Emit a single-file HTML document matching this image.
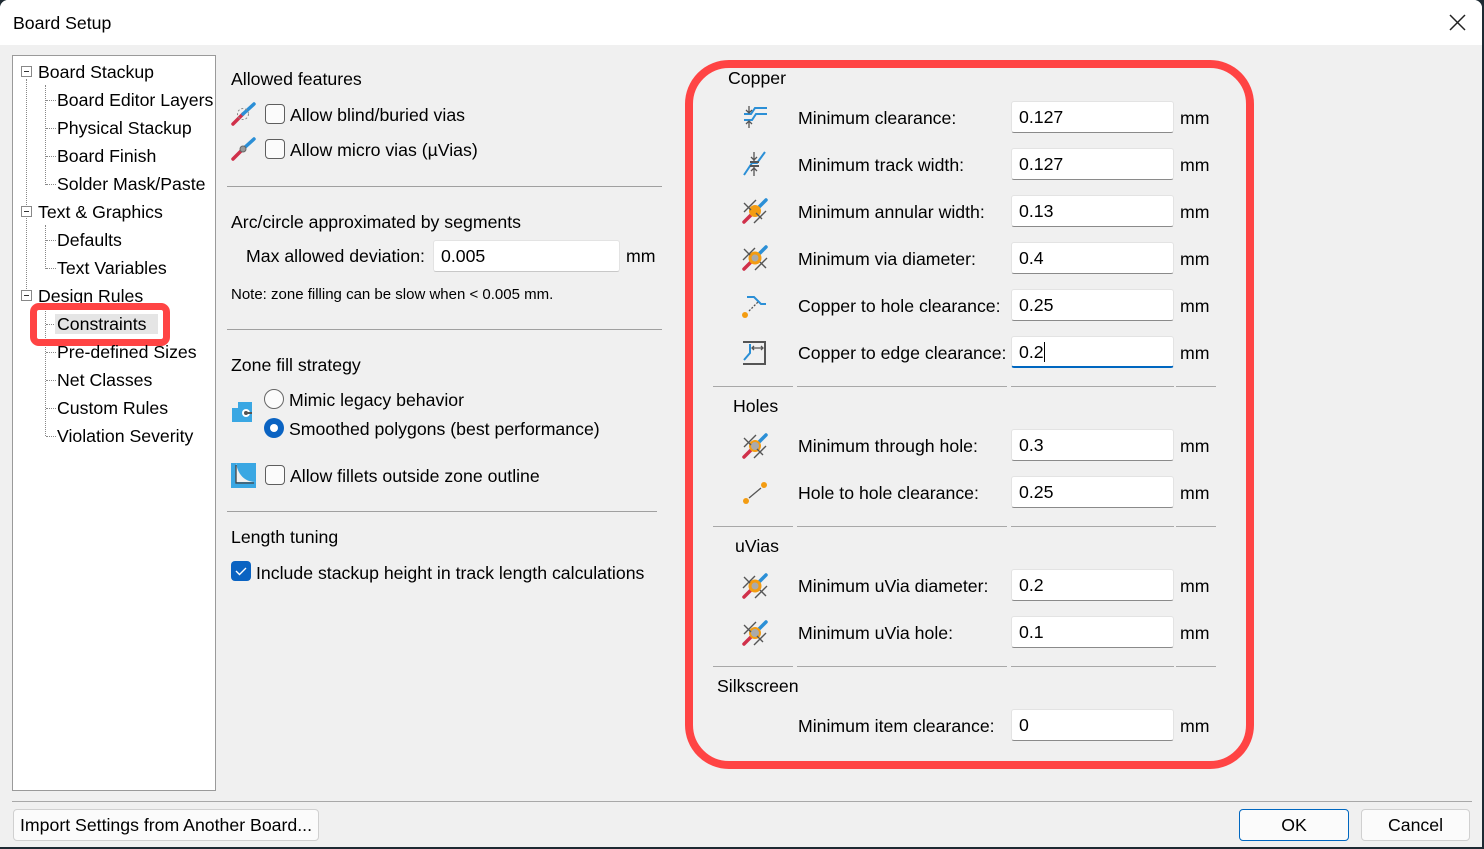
<!DOCTYPE html>
<html><head><meta charset="utf-8"><style>
*{box-sizing:border-box;margin:0;padding:0}
body{width:1484px;height:849px;overflow:hidden;background:#1e2a33;font-family:"Liberation Sans",sans-serif;font-size:17.7px;color:#000;position:relative}
#win{position:absolute;left:0;top:0;width:1482px;height:847px;background:#f0f0f0;border-radius:8px 8px 0 0;overflow:hidden}
.t{position:absolute;white-space:nowrap;line-height:22px}
.title{position:absolute;left:0;top:0;width:1482px;height:45px;background:#fff}
.tree{position:absolute;left:12px;top:55px;width:204px;height:736px;background:#fff;border:1px solid #9a9a9a}
.hl{position:absolute;left:227px;height:1px;background:#a0a0a0}
.sep{position:absolute;height:1px;background:#a8a8a8}
.inp{position:absolute;left:1011px;width:163px;height:32px;background:#fff;border:1px solid #e3e3e3;border-bottom:1px solid #8a8a8a;border-radius:3px;padding-left:7px;line-height:30px}
.cb{position:absolute;width:20px;height:20px;border:1px solid #5e5e5e;border-radius:4px;background:#fbfbfb}
.mm{position:absolute;left:1180px}
.ic{position:absolute}
.dot{position:absolute;border-left:1px dotted #888}
.doth{position:absolute;border-top:1px dotted #888;width:10px}
.pm{position:absolute;width:11px;height:11px;border:1px solid #888;background:#fff}
.pm:after{content:"";position:absolute;left:2px;top:4px;width:5px;height:1px;background:#333}
.btn{position:absolute;height:32px;border:1px solid #d0d0d0;border-radius:4px;background:#fbfbfb;text-align:center;line-height:30px}
</style></head><body><div id="win">
<div class="title"></div>
<div class="t" style="left:13px;top:12px">Board Setup</div>
<svg class="ic" style="left:1449px;top:14px" width="17" height="17"><path d="M1 1L16 16M16 1L1 16" stroke="#222" stroke-width="1.5"/></svg>

<div class="tree"></div>
<div class="dot" style="left:26px;top:79px;height:216px"></div>
<div class="dot" style="left:45px;top:85px;height:100px"></div>
<div class="dot" style="left:45px;top:225px;height:44px"></div>
<div class="dot" style="left:45px;top:308px;height:128px"></div>
<div class="pm" style="left:21px;top:66px"></div>
<div class="pm" style="left:21px;top:206px"></div>
<div class="pm" style="left:21px;top:290px"></div>
<div class="doth" style="left:46px;top:100px"></div><div class="doth" style="left:46px;top:128px"></div><div class="doth" style="left:46px;top:156px"></div><div class="doth" style="left:46px;top:184px"></div>
<div class="doth" style="left:46px;top:240px"></div><div class="doth" style="left:46px;top:268px"></div>
<div class="doth" style="left:46px;top:324px"></div><div class="doth" style="left:46px;top:352px"></div><div class="doth" style="left:46px;top:380px"></div><div class="doth" style="left:46px;top:408px"></div><div class="doth" style="left:46px;top:436px"></div>
<div class="t" style="left:38px;top:61px">Board Stackup</div>
<div class="t" style="left:57px;top:89px">Board Editor Layers</div>
<div class="t" style="left:57px;top:117px">Physical Stackup</div>
<div class="t" style="left:57px;top:145px">Board Finish</div>
<div class="t" style="left:57px;top:173px">Solder Mask/Paste</div>
<div class="t" style="left:38px;top:201px">Text &amp; Graphics</div>
<div class="t" style="left:57px;top:229px">Defaults</div>
<div class="t" style="left:57px;top:257px">Text Variables</div>
<div class="t" style="left:38px;top:285px">Design Rules</div>
<div style="position:absolute;left:55px;top:314px;width:103px;height:20px;background:#e5e5e5"></div>
<div class="t" style="left:57px;top:313px">Constraints</div>
<div style="position:absolute;left:30px;top:303px;width:140px;height:43px;border:7px solid #ff4444;border-radius:9px"></div>
<div class="t" style="left:57px;top:341px">Pre-defined Sizes</div>
<div class="t" style="left:57px;top:369px">Net Classes</div>
<div class="t" style="left:57px;top:397px">Custom Rules</div>
<div class="t" style="left:57px;top:425px">Violation Severity</div>

<div class="t" style="left:231px;top:68px">Allowed features</div>
<svg class="ic" style="left:230px;top:102px" width="26" height="24"><path d="M3 22L13 12" stroke="#d0304a" stroke-width="3.5" stroke-linecap="round"/><path d="M13 12L24 2" stroke="#2b8fd6" stroke-width="3.5" stroke-linecap="round"/><circle cx="13" cy="12" r="5.5" fill="none" stroke="#888" stroke-dasharray="2 2"/></svg>
<div class="cb" style="left:265px;top:104px"></div>
<div class="t" style="left:290px;top:104px">Allow blind/buried vias</div>
<svg class="ic" style="left:230px;top:137px" width="26" height="24"><path d="M3 22L13 12" stroke="#d0304a" stroke-width="3.5" stroke-linecap="round"/><path d="M13 12L24 2" stroke="#2b8fd6" stroke-width="3.5" stroke-linecap="round"/><circle cx="13" cy="12" r="3" fill="#999" stroke="#666"/></svg>
<div class="cb" style="left:265px;top:139px"></div>
<div class="t" style="left:290px;top:139px">Allow micro vias (µVias)</div>
<div class="hl" style="top:186px;width:435px"></div>
<div class="t" style="left:231px;top:211px">Arc/circle approximated by segments</div>
<div class="t" style="left:246px;top:245px">Max allowed deviation:</div>
<div class="inp" style="left:433px;top:240px;width:187px;border-bottom-color:#c8c8c8">0.005</div>
<div class="t" style="left:626px;top:245px">mm</div>
<div class="t" style="left:231px;top:284px;font-size:15px">Note: zone filling can be slow when &lt; 0.005 mm.</div>
<div class="hl" style="top:329px;width:435px"></div>
<div class="t" style="left:231px;top:354px">Zone fill strategy</div>
<svg class="ic" style="left:232px;top:402px" width="22" height="22"><path d="M0 6H6V0H20V20H0Z" fill="#3aa7e3"/><circle cx="14" cy="11" r="4" fill="#fff"/><circle cx="14" cy="11" r="2" fill="#555"/><path d="M14 11H20" stroke="#555" stroke-width="2"/></svg>
<div style="position:absolute;left:264px;top:389px;width:20px;height:20px;border:1px solid #666;border-radius:50%;background:#fbfbfb"></div>
<div class="t" style="left:289px;top:389px">Mimic legacy behavior</div>
<div style="position:absolute;left:264px;top:418px;width:20px;height:20px;border-radius:50%;background:#0a63c2"><div style="position:absolute;left:6px;top:6px;width:8px;height:8px;border-radius:50%;background:#fff"></div></div>
<div class="t" style="left:289px;top:418px">Smoothed polygons (best performance)</div>
<svg class="ic" style="left:231px;top:463px" width="25" height="25"><path d="M0 0H25V25H0Z" fill="#3aa7e3"/><path d="M5 0V19H25C14 19 7 12 5 0Z" fill="#f0f0f0"/><path d="M5 2V20H23" stroke="#444" stroke-width="1.3" fill="none"/></svg>
<div class="cb" style="left:265px;top:465px"></div>
<div class="t" style="left:290px;top:465px">Allow fillets outside zone outline</div>
<div class="hl" style="top:511px;width:430px"></div>
<div class="t" style="left:231px;top:526px">Length tuning</div>
<div style="position:absolute;left:231px;top:561px;width:20px;height:20px;border-radius:4px;background:#0a63c2"><svg width="20" height="20"><path d="M5 10L8.5 13.5L15 7" stroke="#fff" stroke-width="1.4" fill="none"/></svg></div>
<div class="t" style="left:256px;top:562px">Include stackup height in track length calculations</div>

<div class="t" style="left:728px;top:67px">Copper</div>
<div class="t" style="left:733px;top:395px">Holes</div>
<div class="t" style="left:735px;top:535px">uVias</div>
<div class="t" style="left:717px;top:675px">Silkscreen</div>
<div class="sep" style="left:713px;top:386px;width:80px"></div><div class="sep" style="left:797px;top:386px;width:210px"></div><div class="sep" style="left:1011px;top:386px;width:163px"></div><div class="sep" style="left:1176px;top:386px;width:40px"></div>
<div class="sep" style="left:713px;top:526px;width:80px"></div><div class="sep" style="left:797px;top:526px;width:210px"></div><div class="sep" style="left:1011px;top:526px;width:163px"></div><div class="sep" style="left:1176px;top:526px;width:40px"></div>
<div class="sep" style="left:713px;top:666px;width:80px"></div><div class="sep" style="left:797px;top:666px;width:210px"></div><div class="sep" style="left:1011px;top:666px;width:163px"></div><div class="sep" style="left:1176px;top:666px;width:40px"></div>

<svg class="ic" style="left:743px;top:105px" width="26" height="24"><path d="M1 9H8L12 3H24M1 15H9L13 9H24" stroke="#2b8fd6" stroke-width="2" fill="none"/><path d="M6 1V8M6 16V23M3 5L6 8L9 5M3 19L6 16L9 19" stroke="#555" stroke-width="1.3" fill="none"/></svg>
<svg class="ic" style="left:743px;top:151px" width="26" height="26"><path d="M1 24L9 12H14L22 1" stroke="#2b8fd6" stroke-width="2" fill="none"/><path d="M7 11H16M7 15H16" stroke="#555" stroke-width="2"/><path d="M11 1V10M11 16V25M8 6L11 9L14 6M8 20L11 17L14 20" stroke="#555" stroke-width="1.3" fill="none"/></svg>
<svg class="ic" style="left:741px;top:198px" width="28" height="26"><path d="M3 24L14 13" stroke="#d0304a" stroke-width="3.5" stroke-linecap="round"/><path d="M14 13L25 2" stroke="#2b8fd6" stroke-width="3.5" stroke-linecap="round"/><circle cx="14" cy="13" r="6" fill="#f39c12"/><path d="M3 14L15 2M13 25L25 13M3 5L10 12M15 15L21 21" stroke="#555" stroke-width="1.4"/></svg>
<svg class="ic" style="left:741px;top:245px" width="28" height="26"><path d="M3 24L14 13" stroke="#d0304a" stroke-width="3.5" stroke-linecap="round"/><path d="M14 13L25 2" stroke="#2b8fd6" stroke-width="3.5" stroke-linecap="round"/><circle cx="14" cy="13" r="6.5" fill="#f39c12"/><circle cx="14" cy="13" r="3.5" fill="#aaa"/><path d="M2 15L14 3M14 25L26 13M3 4L9 10M19 17L25 23" stroke="#555" stroke-width="1.4"/></svg>
<svg class="ic" style="left:741px;top:293px" width="28" height="26"><path d="M6 4H13L20 11H25" stroke="#2b8fd6" stroke-width="2" fill="none"/><circle cx="4" cy="22" r="3" fill="#f39c12"/><path d="M8 18L17 9" stroke="#555" stroke-width="1.3" stroke-dasharray="2 1.5"/></svg>
<svg class="ic" style="left:741px;top:340px" width="28" height="26"><path d="M2 2H24V24H2" stroke="#555" stroke-width="2" fill="none"/><path d="M9 4V13L3 20" stroke="#2b8fd6" stroke-width="2" fill="none"/><path d="M11 8H22M13 6L11 8L13 10M20 6L22 8L20 10" stroke="#555" stroke-width="1.3" fill="none"/></svg>
<svg class="ic" style="left:741px;top:433px" width="28" height="26"><path d="M3 24L14 13" stroke="#d0304a" stroke-width="3.5" stroke-linecap="round"/><path d="M14 13L25 2" stroke="#2b8fd6" stroke-width="3.5" stroke-linecap="round"/><circle cx="14" cy="13" r="6" fill="#f39c12"/><circle cx="14" cy="13" r="4" fill="#aaa"/><path d="M3 14L15 2M13 25L25 13M3 5L10 12M16 16L22 22" stroke="#555" stroke-width="1.4"/></svg>
<svg class="ic" style="left:741px;top:480px" width="28" height="26"><circle cx="5" cy="21" r="3" fill="#f39c12"/><circle cx="23" cy="5" r="3" fill="#f39c12"/><path d="M8 18L20 8" stroke="#555" stroke-width="1.3"/></svg>
<svg class="ic" style="left:741px;top:573px" width="28" height="26"><path d="M3 24L14 13" stroke="#d0304a" stroke-width="3.5" stroke-linecap="round"/><path d="M14 13L25 2" stroke="#2b8fd6" stroke-width="3.5" stroke-linecap="round"/><circle cx="14" cy="13" r="6.5" fill="#f39c12"/><circle cx="14" cy="13" r="3.5" fill="#aaa"/><path d="M2 15L14 3M14 25L26 13M3 4L9 10M19 17L25 23" stroke="#555" stroke-width="1.4"/></svg>
<svg class="ic" style="left:741px;top:620px" width="28" height="26"><path d="M3 24L14 13" stroke="#d0304a" stroke-width="3.5" stroke-linecap="round"/><path d="M14 13L25 2" stroke="#2b8fd6" stroke-width="3.5" stroke-linecap="round"/><circle cx="14" cy="13" r="6" fill="#f39c12"/><circle cx="14" cy="13" r="4" fill="#aaa"/><path d="M3 14L15 2M13 25L25 13M3 5L10 12M16 16L22 22" stroke="#555" stroke-width="1.4"/></svg>

<div class="t" style="left:798px;top:107px">Minimum clearance:</div>
<div class="t" style="left:798px;top:154px">Minimum track width:</div>
<div class="t" style="left:798px;top:201px">Minimum annular width:</div>
<div class="t" style="left:798px;top:248px">Minimum via diameter:</div>
<div class="t" style="left:798px;top:295px">Copper to hole clearance:</div>
<div class="t" style="left:798px;top:342px">Copper to edge clearance:</div>
<div class="t" style="left:798px;top:435px">Minimum through hole:</div>
<div class="t" style="left:798px;top:482px">Hole to hole clearance:</div>
<div class="t" style="left:798px;top:575px">Minimum uVia diameter:</div>
<div class="t" style="left:798px;top:622px">Minimum uVia hole:</div>
<div class="t" style="left:798px;top:715px">Minimum item clearance:</div>

<div class="inp" style="top:101px">0.127</div>
<div class="inp" style="top:148px">0.127</div>
<div class="inp" style="top:195px">0.13</div>
<div class="inp" style="top:242px">0.4</div>
<div class="inp" style="top:289px">0.25</div>
<div class="inp" style="top:336px;border-bottom:2px solid #0067c0">0.2<span style="display:inline-block;width:1px;height:20px;background:#000;vertical-align:-4px"></span></div>
<div class="inp" style="top:429px">0.3</div>
<div class="inp" style="top:476px">0.25</div>
<div class="inp" style="top:569px">0.2</div>
<div class="inp" style="top:616px">0.1</div>
<div class="inp" style="top:709px">0</div>
<div class="t mm" style="top:107px">mm</div><div class="t mm" style="top:154px">mm</div><div class="t mm" style="top:201px">mm</div><div class="t mm" style="top:248px">mm</div><div class="t mm" style="top:295px">mm</div><div class="t mm" style="top:342px">mm</div><div class="t mm" style="top:435px">mm</div><div class="t mm" style="top:482px">mm</div><div class="t mm" style="top:575px">mm</div><div class="t mm" style="top:622px">mm</div><div class="t mm" style="top:715px">mm</div>

<div style="position:absolute;left:685px;top:60px;width:569px;height:709px;border:8px solid #ff4444;border-radius:44px"></div>

<div class="sep" style="left:12px;top:801px;width:1460px"></div>
<div class="btn" style="left:13px;top:809px;width:306px">Import Settings from Another Board...</div>
<div class="btn" style="left:1239px;top:809px;width:110px;border-color:#0067c0">OK</div>
<div class="btn" style="left:1361px;top:809px;width:109px">Cancel</div>
</div></body></html>
